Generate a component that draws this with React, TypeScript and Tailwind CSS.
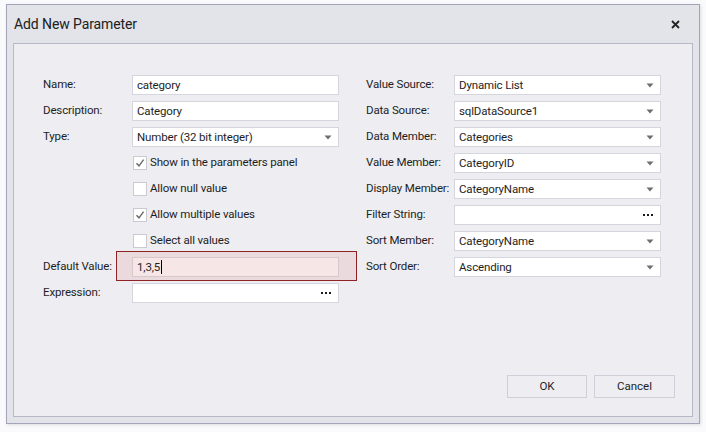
import React from "react";

const font = { fontFamily: 'Roboto, "Noto Sans", sans-serif' };

function Arrow() {
  return (
    <svg width="8" height="5" viewBox="0 0 8 5" className="shrink-0">
      <path d="M0.5 0.5 L7.5 0.5 L4 4.5 Z" fill="#6e6e6e" />
    </svg>
  );
}

function Dots() {
  return (
    <svg width="11" height="3" viewBox="0 0 11 3" className="shrink-0">
      <rect x="0" y="0" width="2" height="2" fill="#1a1a1a" />
      <rect x="4" y="0" width="2" height="2" fill="#1a1a1a" />
      <rect x="8" y="0" width="2" height="2" fill="#1a1a1a" />
    </svg>
  );
}

function Input({
  value,
  kind,
  highlight,
}: {
  value?: string;
  kind?: "combo" | "dots" | "text";
  highlight?: boolean;
}) {
  return (
    <div
      className={`h-[20px] w-[207px] flex items-center pl-[4px] pr-[6px] border ${
        highlight ? "bg-[#f7e6e6] border-[#d8c8cc]" : "bg-white border-[#d5d5dd]"
      }`}
    >
      <span className="flex-1 text-[11.5px] tracking-[-0.15px] leading-[16px] text-[#1e1e1e] whitespace-nowrap overflow-hidden">
        {value}
        {highlight && <span className="inline-block w-[1px] h-[14px] bg-black align-middle ml-[1px] -mt-[2px]" />}
      </span>
      {kind === "combo" && <Arrow />}
      {kind === "dots" && <Dots />}
    </div>
  );
}

function Row({
  label,
  labelW,
  children,
}: {
  label?: string;
  labelW: string;
  children: React.ReactNode;
}) {
  return (
    <div className="h-[26px] flex items-center">
      <div className={`${labelW} text-[11.5px] tracking-[-0.15px] text-[#1e1e1e] shrink-0 whitespace-nowrap`}>{label}</div>
      {children}
    </div>
  );
}

function Check({ checked, label }: { checked: boolean; label: string }) {
  return (
    <div className="h-[26px] flex items-center">
      <div className="w-[89px] shrink-0" />
      <div className="w-[14px] h-[14px] ml-[1px] border border-[#cacad2] bg-white flex items-center justify-center">
        {checked && (
          <svg width="10" height="10" viewBox="0 0 10 10">
            <path d="M1.5 5.2 L4 7.8 L8.6 1.6" stroke="#6a6a6a" strokeWidth="1.4" fill="none" />
          </svg>
        )}
      </div>
      <span className="ml-[3px] text-[11.5px] tracking-[-0.15px] text-[#1e1e1e] whitespace-nowrap">{label}</span>
    </div>
  );
}

export default function App() {
  return (
    <div className="w-[706px] h-[432px] bg-[#fafafc] pt-[4px] pl-[6px]" style={font}>
      <div className="w-[694px] h-[420px] bg-[#e3e3ea] border border-[#a3a3b9] shadow-[1px_1px_3px_rgba(0,0,0,0.12)] flex flex-col">
        <div className="h-[38px] flex items-center justify-between pl-[7px] pr-[19px]">
          <span className="text-[14px] tracking-[-0.1px] text-[#202020]">Add New Parameter</span>
          <svg width="9" height="9" viewBox="0 0 9 9">
            <path d="M1 1 L8 8 M8 1 L1 8" stroke="#222" strokeWidth="1.8" />
          </svg>
        </div>
        <div className="ml-[6px] w-[680px] h-[374px] bg-[#ededf2] border border-[#b7b7c8] relative">
          <div className="absolute left-[102px] top-[207px] w-[241px] h-[30px] border border-[#8e2323] bg-[#eadadd]" />
          <div className="relative flex pt-[28px] pl-[29px]">
            <div className="flex flex-col">
              <Row label="Name:" labelW="w-[89px]">
                <Input value="category" />
              </Row>
              <Row label="Description:" labelW="w-[89px]">
                <Input value="Category" />
              </Row>
              <Row label="Type:" labelW="w-[89px]">
                <Input value="Number (32 bit integer)" kind="combo" />
              </Row>
              <Check checked label="Show in the parameters panel" />
              <Check checked={false} label="Allow null value" />
              <Check checked label="Allow multiple values" />
              <Check checked={false} label="Select all values" />
              <Row label="Default Value:" labelW="w-[89px]">
                <Input value="1,3,5" highlight />
              </Row>
              <Row label="Expression:" labelW="w-[89px]">
                <Input kind="dots" />
              </Row>
            </div>
            <div className="flex flex-col ml-[27px]">
              <Row label="Value Source:" labelW="w-[88px]">
                <Input value="Dynamic List" kind="combo" />
              </Row>
              <Row label="Data Source:" labelW="w-[88px]">
                <Input value="sqlDataSource1" kind="combo" />
              </Row>
              <Row label="Data Member:" labelW="w-[88px]">
                <Input value="Categories" kind="combo" />
              </Row>
              <Row label="Value Member:" labelW="w-[88px]">
                <Input value="CategoryID" kind="combo" />
              </Row>
              <Row label="Display Member:" labelW="w-[88px]">
                <Input value="CategoryName" kind="combo" />
              </Row>
              <Row label="Filter String:" labelW="w-[88px]">
                <Input kind="dots" />
              </Row>
              <Row label="Sort Member:" labelW="w-[88px]">
                <Input value="CategoryName" kind="combo" />
              </Row>
              <Row label="Sort Order:" labelW="w-[88px]">
                <Input value="Ascending" kind="combo" />
              </Row>
            </div>
          </div>
          <div className="absolute right-[17px] bottom-[18px] flex gap-[7px]">
            <div className="w-[80px] h-[23px] border border-[#cfcfd9] bg-[#ededf2] flex items-center justify-center text-[11.5px] text-[#1e1e1e]">
              OK
            </div>
            <div className="w-[81px] h-[23px] border border-[#cfcfd9] bg-[#ededf2] flex items-center justify-center text-[11.5px] text-[#1e1e1e]">
              Cancel
            </div>
          </div>
        </div>
      </div>
    </div>
  );
}
